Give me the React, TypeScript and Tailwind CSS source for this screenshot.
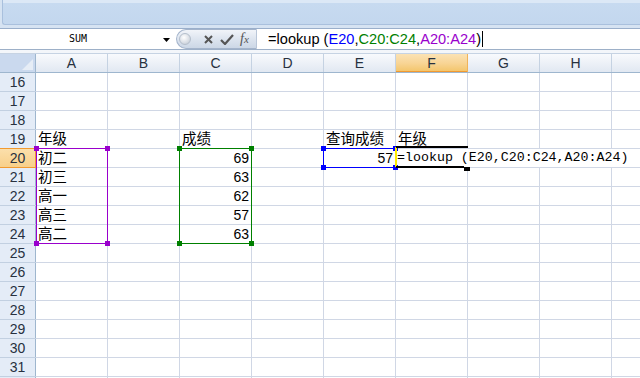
import React from 'react';

const COLS = ['A', 'B', 'C', 'D', 'E', 'F', 'G', 'H', 'I'];
const ROWS = Array.from({ length: 17 }, (_, i) => 16 + i);

const SANS = "font-['Liberation_Sans','Noto_Sans_CJK_SC',sans-serif]";

type Cell = { text: string; right?: boolean };

const cells: Record<string, Cell> = {
  A19: { text: '年级' },
  A20: { text: '初二' },
  A21: { text: '初三' },
  A22: { text: '高一' },
  A23: { text: '高三' },
  A24: { text: '高二' },
  C19: { text: '成绩' },
  C20: { text: '69', right: true },
  C21: { text: '63', right: true },
  C22: { text: '62', right: true },
  C23: { text: '57', right: true },
  C24: { text: '63', right: true },
  E19: { text: '查询成绩' },
  E20: { text: '57', right: true },
  F19: { text: '年级' },
};

function Ribbon() {
  return (
    <div className="h-[29px] border-b border-[#9aafcb] bg-[#d6e3f2]">
      <div className="ml-[2px] h-[25px] rounded-bl-[3px] border-b border-l border-[#a9c0dd] bg-[linear-gradient(#dce8f6_0,#dce8f6_3px,#c7daf0_3px,#c3d7ee_100%)]" />
    </div>
  );
}

function FormulaBar() {
  return (
    <div className="flex h-[21px] border-b border-[#9db0c8] bg-white">
      <div className="relative w-[176px] shrink-0">
        <span className="absolute left-[69px] top-[3px] font-['DejaVu_Sans_Mono',monospace] text-[10px] leading-[14px] text-black">
          SUM
        </span>
        <svg className="absolute left-[163px] top-[9px]" width="7" height="4" viewBox="0 0 7 4">
          <path d="M0 0h7L3.5 4z" fill="#000" />
        </svg>
      </div>
      <div className="flex w-[81px] shrink-0 items-center rounded-l-full border-y border-l border-r border-[#a4b4cb] border-r-[#b9c6d8] bg-[linear-gradient(#f1f4f9,#dbe3ee_55%,#ccd7e6)]">
        <div className="ml-[2px] h-[12px] w-[12px] rounded-full border border-[#b5bfcc] bg-[radial-gradient(circle_at_40%_35%,#ffffff,#d8dde4_60%,#b9c1cc)]" />
        <svg className="ml-[13px]" width="9" height="9" viewBox="0 0 9 9">
          <path d="M1 1l7 7M8 1L1 8" stroke="#555" strokeWidth="2" />
        </svg>
        <svg className="ml-[7px]" width="14" height="11" viewBox="0 0 14 11">
          <path d="M1 6l4 4L13 1" stroke="#555" strokeWidth="2.2" fill="none" />
        </svg>
        <span className="ml-[6px] font-['Liberation_Serif',serif] text-[14px] italic leading-[16px] text-[#555]">
          f<span className="text-[11px]">x</span>
        </span>
      </div>
      <div className={`flex flex-1 items-center pl-[11px] text-[14.6px] leading-[18px] text-black ${SANS}`}>
        <span>=lookup (</span>
        <span className="text-[#0000ff]">E20</span>
        <span>,</span>
        <span className="text-[#008000]">C20:C24</span>
        <span>,</span>
        <span className="text-[#9900cc]">A20:A24</span>
        <span>)</span>
        <span className="ml-[1px] h-[16px] w-px bg-black" />
      </div>
    </div>
  );
}

function HeaderRow() {
  return (
    <div className={`flex h-[19px] border-b border-[#9eb6ce] text-[14px] leading-[18px] text-[#27313f] ${SANS}`}>
      <div className="relative w-[36px] shrink-0 border-r border-[#9eb6ce] bg-[#cad9ee]">
        <svg className="absolute bottom-[2px] right-[2px]" width="11" height="11" viewBox="0 0 11 11">
          <path d="M11 0V11H0z" fill="#e6edf6" />
        </svg>
      </div>
      {COLS.map((c) => (
        <div
          key={c}
          className={
            c === 'F'
              ? 'flex w-[72px] shrink-0 justify-center border-r border-[#f0b35a] bg-[linear-gradient(#fbe2b4,#f8d596_50%,#f3c468)] shadow-[inset_0_-1px_0_#f29a30]'
              : 'flex w-[72px] shrink-0 justify-center border-r border-[#c5d2e2] bg-[linear-gradient(#f8fafd,#edf1f7_50%,#e1e8f2)]'
          }
        >
          {c === 'I' ? '' : c}
        </div>
      ))}
    </div>
  );
}

function GridRow({ r }: { r: number }) {
  const active = r === 20;
  return (
    <div className="flex h-[19px] border-b border-[#d0d7e5]">
      <div
        className={
          active
            ? 'flex w-[36px] shrink-0 justify-center border-r border-[#f29a30] bg-[linear-gradient(#fbdfab,#f8d08a)] shadow-[0_1px_0_#f29a30,0_-1px_0_#f29a30] text-[14px] leading-[18px] text-[#27313f]'
            : 'flex w-[36px] shrink-0 justify-center border-r border-[#9eb6ce] bg-[#e4ecf7] shadow-[0_1px_0_#c2d0e1] text-[14px] leading-[18px] text-[#27313f]'
        }
      >
        {r < 32 ? r : ''}
      </div>
      {COLS.map((c) => {
        const cell = cells[`${c}${r}`];
        return (
          <div
            key={c}
            className={
              cell?.right
                ? 'flex w-[72px] shrink-0 justify-end whitespace-nowrap border-r border-[#d0d7e5] pr-[2px] text-[14px] leading-[18px] text-black'
                : 'flex w-[72px] shrink-0 whitespace-nowrap border-r border-[#d0d7e5] pl-[2px] text-[14.5px] leading-[18px] text-black'
            }
          >
            {cell?.text}
          </div>
        );
      })}
    </div>
  );
}

function Handle({ x, y, color }: { x: number; y: number; color: string }) {
  return (
    <div
      className="absolute h-[5px] w-[5px]"
      style={{ left: x - 2, top: y - 2, background: color }}
    />
  );
}

function RangeBox({ x, y, w, h, color }: { x: number; y: number; w: number; h: number; color: string }) {
  return (
    <>
      <div className="absolute border" style={{ left: x, top: y, width: w, height: h, borderColor: color }} />
      <Handle x={x} y={y} color={color} />
      <Handle x={x + w - 1} y={y} color={color} />
      <Handle x={x} y={y + h - 1} color={color} />
      <Handle x={x + w - 1} y={y + h - 1} color={color} />
    </>
  );
}

// overlays use page coordinates minus grid top (73)
function Overlays() {
  return (
    <>
      <RangeBox x={36} y={75} w={72} h={96} color="#9900cc" />
      <RangeBox x={179} y={75} w={73} h={96} color="#008000" />
      <div className="absolute flex h-[18px] w-[244px] bg-white pl-[1px] font-['Liberation_Mono',monospace] text-[13.3px] leading-[18px] text-black" style={{ left: 396, top: 76 }}>
        =lookup (E20,C20:C24,A20:A24)
      </div>
      <RangeBox x={323} y={75} w={73} h={20} color="#0000ff" />
      <div className="absolute h-[20px] w-[2px] bg-[#ffee00]" style={{ left: 395, top: 74 }} />
      <div className="absolute h-[2px] w-[72px] bg-black" style={{ left: 396, top: 73 }} />
      <div className="absolute h-[2px] w-[68px] bg-black" style={{ left: 396, top: 93 }} />
      <div className="absolute h-[4px] w-[6px] bg-black" style={{ left: 464, top: 94 }} />
    </>
  );
}

export default function App() {
  return (
    <div className={`h-[378px] w-[640px] overflow-hidden bg-white ${SANS}`}>
      <Ribbon />
      <FormulaBar />
      <div className="h-[4px] border-b border-[#c6d3e3] bg-[#f3f6fa]" />
      <HeaderRow />
      <div className="relative">
        {ROWS.map((r) => (
          <GridRow key={r} r={r} />
        ))}
        <Overlays />
      </div>
    </div>
  );
}
